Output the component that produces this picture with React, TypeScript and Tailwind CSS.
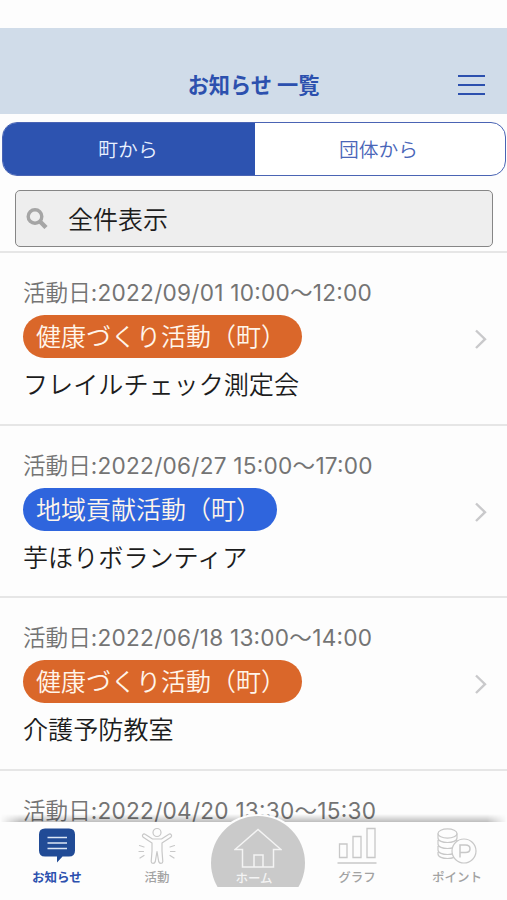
import type { ReactNode } from "react";

type Notice = {
  date: string;
  tag?: string;
  tagColor?: string;
  title?: string;
};

const notices: Notice[] = [
  { date: "2022/09/01 10:00～12:00", tag: "健康づくり活動（町）", tagColor: "bg-[#da672a]", title: "フレイルチェック測定会" },
  { date: "2022/06/27 15:00～17:00", tag: "地域貢献活動（町）", tagColor: "bg-[#2f65dd]", title: "芋ほりボランティア" },
  { date: "2022/06/18 13:00～14:00", tag: "健康づくり活動（町）", tagColor: "bg-[#da672a]", title: "介護予防教室" },
  { date: "2022/04/20 13:30～15:30" },
];

function NoticeRow({ notice }: { notice: Notice }) {
  return (
    <li className="flex h-[172.6px] items-start justify-between border-b-2 border-[#e6e6e6] pl-[23px] pr-[19px] pt-[23px]">
      <div className="flex flex-col items-start">
        <p className="h-[34px] whitespace-nowrap text-[22.6px] font-normal leading-[34px] tracking-[0.25px] text-[#747474]">
          <span className="font-[350] tracking-normal">活動日</span>:
          <span className="[font-feature-settings:'case']">{notice.date}</span>
        </p>
        {notice.tag && (
          <span className={`mt-[5px] h-[43px] whitespace-nowrap rounded-full pl-[13px] pr-4 text-[25px] leading-[44px] text-[#fff5ea] ${notice.tagColor}`}>
            {notice.tag}
          </span>
        )}
        <p className="mt-[9px] h-[34px] whitespace-nowrap text-[25.1px] leading-[36px] text-[#1c1c1c]">{notice.title}</p>
      </div>
      {notice.tag && (
        <svg className="mt-[53px] h-5 w-[14px]" viewBox="0 0 14 20" fill="none" stroke="#c9c9cb" strokeWidth="2.4">
          <path d="M2 1.5 11 10.2 2 19" />
        </svg>
      )}
    </li>
  );
}

function NavItem({ label, active, children }: { label: string; active?: boolean; children: ReactNode }) {
  return (
    <div className="flex w-[100px] flex-col items-center pt-[5px]">
      {children}
      <span className={`mt-px text-[12.5px] leading-[18px] ${active ? "font-bold text-[#2c50ae]" : "font-medium text-[#a2a2a2]"}`}>{label}</span>
    </div>
  );
}

export default function App() {
  return (
    <div className="relative flex h-[900px] w-[507px] flex-col overflow-hidden bg-[#fdfdfd] font-['Inter','Noto_Sans_CJK_JP',sans-serif] font-[350]">
      <header className="mt-7 grid h-[86px] shrink-0 grid-cols-[1fr_auto_1fr] items-end bg-[#d0dce9] pb-[14px]">
        <h1 className="col-start-2 text-[21.2px] font-bold leading-[30px] text-[#2c50ae]">お知らせ 一覧</h1>
        <button className="mb-[5px] mr-[22px] flex h-5 w-[27px] flex-col justify-between justify-self-end" aria-label="メニュー">
          <span className="h-[2px] w-full bg-[#2c50ae]" />
          <span className="h-[2px] w-full bg-[#2c50ae]" />
          <span className="h-[2px] w-full bg-[#2c50ae]" />
        </button>
      </header>

      <div className="ml-[2px] mt-2 flex h-[54px] w-[504px] shrink-0 overflow-hidden rounded-[15px] border-[1.5px] border-[#4a64b4] bg-white text-[19.8px]">
        <button className="w-[252px] bg-[#2d53b0] pr-0.5 pt-[3px] text-[#e8f0ff]">町から</button>
        <button className="flex-1 pr-[3px] pt-[3px] text-[#4a66b8]">団体から</button>
      </div>

      <div className="ml-[15px] mt-[14px] flex h-[57px] w-[478px] shrink-0 items-center rounded-[5px] border-[1.5px] border-[#868686] bg-[#eeeeee] pl-[10px]">
        <svg className="mb-0.5 h-[22px] w-[22px]" viewBox="0 0 22 22" fill="none" stroke="#a5a5a5">
          <circle cx="9" cy="9.5" r="6.8" strokeWidth="3.4" />
          <path d="m14 14.5 6 6" strokeWidth="4.4" />
        </svg>
        <span className="pl-5 pt-1 text-[25px] text-[#1c1c1c]">全件表示</span>
      </div>

      <ul className="mt-1 border-t-2 border-[#e6e6e6]">
        {notices.map((notice) => (
          <NoticeRow key={notice.date} notice={notice} />
        ))}
      </ul>

      <nav className="absolute bottom-0 left-0 h-[78px] w-full bg-[#fdfdfd]">
        <div className="absolute -top-[8px] left-0 h-[8px] w-full bg-gradient-to-b from-black/0 to-black/25 [mask-image:linear-gradient(to_right,transparent,black_20px,black_487px,transparent)]" />
        <div className="absolute -top-[8px] left-[208px] h-[86px] w-[100px] overflow-hidden">
          <div className="h-[100px] w-[100px] rounded-full bg-[#fdfdfd]" />
        </div>
        <div className="relative flex pl-[7px]">
          <NavItem label="お知らせ" active>
            <svg className="h-[41px] w-[38px]" viewBox="0 0 38 41">
              <path d="M7 1.500h24q6 0 6 6v16q0 6-6 6h-6.500l-5.500 6v-6H7q-6 0-6-6v-16q0-6 6-6Z" fill="#214b96" />
              <path d="M9.500 10.500h19.500M9.500 16h19.500M9.500 21.500h19.500" stroke="#dce6f5" strokeWidth="1.300" />
            </svg>
          </NavItem>
          <NavItem label="活動">
            <svg className="h-[41px] w-[40px]" viewBox="0 0 40 41" fill="none" stroke="#c8c8c8" strokeWidth="1.200" strokeLinecap="round" strokeLinejoin="round">
              <circle cx="20" cy="5.500" r="4" />
              <path d="M8.500 7.500c-2.200-1.500-4.200 1-2.300 2.700L15 16v8l-.8 10.500c0 2.500 3.500 2.500 4.100 0l1.700-10 1.700 10c.6 2.500 4.100 2.500 4.100 0L25 24v-8l8.800-5.800c1.900-1.700-.1-4.200-2.300-2.700l-7 4.500h-9Z" />
              <path d="m2.500 18.500 4.500 1.500M2 24.500h4.500M3 31l4-2.500M37.500 18.500 33 20M38 24.500h-4.500M37 31l-4-2.500" />
            </svg>
          </NavItem>
          <div className="w-[100px]" />
          <NavItem label="グラフ">
            <svg className="h-[41px] w-[40px]" viewBox="0 0 40 41" fill="none" stroke="#c8c8c8" strokeWidth="1.300">
              <path d="M2.500 17h7.500v13.500H2.500ZM16 9.500h8v21h-8ZM30 1.500h8v29h-8ZM.5 36h39" />
            </svg>
          </NavItem>
          <NavItem label="ポイント">
            <svg className="h-[41px] w-[40px]" viewBox="0 0 40 41" fill="none" stroke="#c8c8c8" strokeWidth="1.200">
              <ellipse cx="10.500" cy="6.500" rx="9.500" ry="4.700" />
              <path d="M1 6.500v4.500c0 6 19 6 19 0V6.500M1 13v4c0 6 19 6 19 0v-4M1 19v4c0 6 19 6 19 0v-4M1 25v2c0 6 19 6 19 0v-2" />
              <circle cx="27" cy="24" r="12" fill="#fdfdfd" />
              <path d="M23 30.500V18h5.500c6 0 6 7.500 0 7.500H23" strokeWidth="1.500" />
            </svg>
          </NavItem>
        </div>
        <div className="absolute -top-[6px] left-[211px] h-[71px] w-[94px] overflow-hidden">
          <div className="flex h-[94px] w-[94px] flex-col items-center rounded-full bg-[#cacaca] pt-[12px] text-[#f4f4f4]">
            <svg className="h-10 w-12" viewBox="0 0 48 40" fill="none" stroke="currentColor" strokeWidth="1.500">
              <path d="M24 1.500 1 21.500h7.500v17.500h31V21.500H47ZM20 39V27h9v12" />
            </svg>
            <span className="mt-[4px] pr-2 text-[12.5px] font-medium leading-[14px]">ホーム</span>
          </div>
        </div>
      </nav>
    </div>
  );
}
